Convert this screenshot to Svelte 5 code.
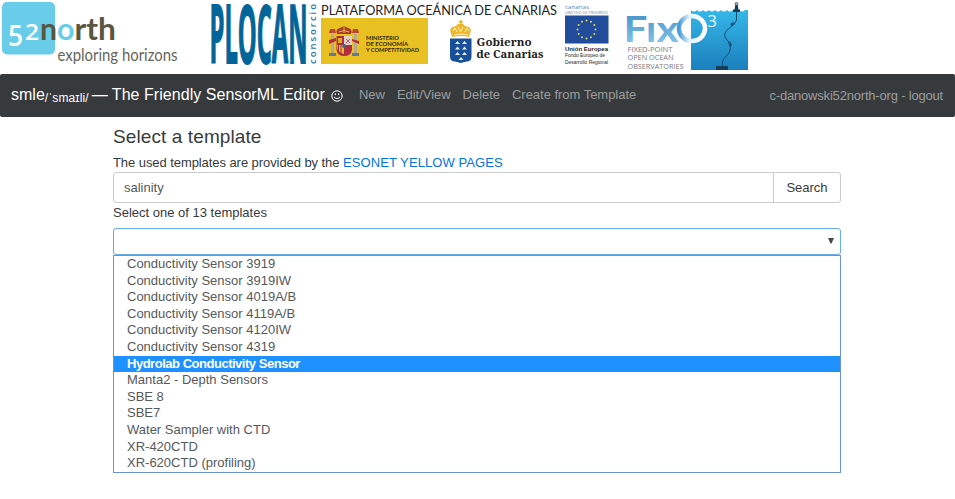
<script>
  const links = ['New', 'Edit/View', 'Delete', 'Create from Template'];
  const templates = [
    'Conductivity Sensor 3919',
    'Conductivity Sensor 3919IW',
    'Conductivity Sensor 4019A/B',
    'Conductivity Sensor 4119A/B',
    'Conductivity Sensor 4120IW',
    'Conductivity Sensor 4319',
    'Hydrolab Conductivity Sensor',
    'Manta2 - Depth Sensors',
    'SBE 8',
    'SBE7',
    'Water Sampler with CTD',
    'XR-420CTD',
    'XR-620CTD (profiling)'
  ];
  const highlighted = 'Hydrolab Conductivity Sensor';
  let query = $state('salinity');
  const stars = Array.from({ length: 12 }, (_, i) => ({
    x: 586.5 + 9 * Math.sin((i * Math.PI) / 6),
    y: 29.5 - 9 * Math.cos((i * Math.PI) / 6)
  }));
</script>

<header class="logos">
  <svg class="north" width="190" height="74" viewBox="0 0 190 74" role="img" aria-label="52north">
    <rect x="2" y="2" width="53" height="52.5" rx="5" fill="#69cdea" />
    <g font-family="Lato" font-weight="700" font-size="31">
      <text x="8" y="45.500" fill="#fff" font-family="Open Sans" font-weight="600" font-size="29" textLength="15" lengthAdjust="spacingAndGlyphs">5</text>
      <text x="25" y="39.500" fill="#fff" font-family="Open Sans" font-weight="600" font-size="21" textLength="14" lengthAdjust="spacingAndGlyphs">2</text>
      <text x="40" y="39.500" fill="#59573f" textLength="17" lengthAdjust="spacingAndGlyphs">n</text>
      <text x="57" y="39.500" fill="#69cdea" textLength="17.500" lengthAdjust="spacingAndGlyphs">o</text>
      <text x="74.500" y="39.500" fill="#59573f" textLength="41.500" lengthAdjust="spacingAndGlyphs">rth</text>
    </g>
    <text x="57.500" y="60.500" fill="#67655a" font-family="Lato" font-size="16.500" textLength="120" lengthAdjust="spacingAndGlyphs">exploring horizons</text>
  </svg>

  <svg class="plocan" width="415" height="74" viewBox="205 0 415 74" role="img" aria-label="PLOCAN consorcio">
    <text x="209.500" y="63" fill="#026599" stroke="#026599" stroke-width="1.800" font-family="Open Sans" font-weight="700" font-size="80" textLength="98" lengthAdjust="spacingAndGlyphs">PLOCAN</text>
    <text transform="translate(316 64) rotate(-90)" fill="#2377a5" font-family="Open Sans" font-weight="600" font-size="9.500" textLength="60">consorcio</text>
    <text x="321" y="15" fill="#222" font-family="Lato" font-size="14" textLength="236" lengthAdjust="spacingAndGlyphs">PLATAFORMA OCEÁNICA DE CANARIAS</text>

    <rect x="321" y="18" width="107" height="46" fill="#e9c022" />
    <g>
      <rect x="331" y="34" width="3" height="19" fill="#b9aa94" />
      <rect x="354" y="34" width="3" height="19" fill="#b9aa94" />
      <path d="M329 33h7l-1-4h-5zM352 33h7l-1-4h-5z" fill="#bd4630" />
      <path d="M329 53h7v3h-7zM352 53h7v3h-7z" fill="#607b98" />
      <path d="M329 40l7-2v3l-7 3zM352 39l7 2v3l-7-3z" fill="#b92d35" />
      <path d="M336.500 36h15.500v14q-1 6-7.750 6t-7.750-6z" fill="#b02e3e" />
      <path d="M344 36h8v9h-8z" fill="#ddd0c7" />
      <path d="M337 45h7v9q-7-1-7-9z" fill="#e6b93b" />
      <path d="M338.500 45v7M341 45v9" stroke="#a8303a" />
      <path d="M338 38h4v5h-4z" fill="#d8a82b" />
      <path d="M346 39l4 4m0-4l-4 4" stroke="#b95d72" />
      <circle cx="344.200" cy="46" r="2" fill="#47618b" />
      <path d="M337 34q-2-5 3-6l4-2 4 2q5 1 3 6z" fill="#a93a2b" />
      <path d="M339 32q5-3 10 0M344 26v7" stroke="#e5b847" fill="none" />
    </g>
    <g fill="#30280b" font-family="Lato" font-weight="700" font-size="5.600">
      <text x="366" y="40" textLength="33" lengthAdjust="spacingAndGlyphs">MINISTERIO</text>
      <text x="366" y="46" textLength="42" lengthAdjust="spacingAndGlyphs">DE ECONOMÍA</text>
      <text x="366" y="52" textLength="53" lengthAdjust="spacingAndGlyphs">Y COMPETITIVIDAD</text>
    </g>

    <path d="M450 38.500h21.500v18q0 5-5 5l-5.750 1.500-5.750-1.500q-5 0-5-5z" fill="#174f98" />
    <path d="M455 44l2.500-3 2.500 3zM462 44l2.500-3 2.500 3zM455 49.500l2.500-3 2.500 3zM462 49.500l2.500-3 2.500 3zM455 55l2.500-3 2.500 3zM462 55l2.500-3 2.500 3zM458.500 60l2.500-3 2.500 3z" fill="#e7f0fa" />
    <path d="M452 37l-2-7 2-3 4-1 2-2h5l2 2 4 1 2 3-2 7q-8-2-17 0z" fill="#edb72c" />
    <path d="M460.800 20v5M458.800 22h4" stroke="#e8b22d" stroke-width="1.500" />
    <path d="M453 31l2-3 2 4m1-5l2.500 5 2.500-5m2 5l2-4 2 3M454 35q7-2 14 0" fill="none" stroke="#fff0b5" stroke-width="1" />
    <g font-family="Noto Serif, DejaVu Serif, Liberation Serif, serif" font-weight="700" font-size="11" fill="#202020">
      <text x="476.500" y="46" textLength="55" lengthAdjust="spacingAndGlyphs">Gobierno</text>
      <text x="476.500" y="57.500" textLength="67" lengthAdjust="spacingAndGlyphs">de Canarias</text>
    </g>

    <text x="565" y="9" fill="#4e83bd" font-family="Open Sans" font-size="6" textLength="24">canarias</text>
    <text x="565" y="13.500" fill="#6387b5" font-family="Open Sans" font-size="4" textLength="43" lengthAdjust="spacingAndGlyphs">OBJETIVO DE PROGRESO</text>
    <rect x="565" y="15.500" width="43.500" height="28" fill="#214b9b" />
    {#each stars as star}
      <circle cx={star.x} cy={star.y} r="1.050" fill="#d9d449" />
    {/each}
    <g font-family="Liberation Sans" fill="#252525" font-size="6">
      <text x="565" y="50.500" font-weight="700" textLength="43" lengthAdjust="spacingAndGlyphs">Unión Europea</text>
      <text x="565" y="57" font-size="5.500" textLength="40" lengthAdjust="spacingAndGlyphs">Fondo Europeo de</text>
      <text x="565" y="63.500" font-size="5.500" textLength="43" lengthAdjust="spacingAndGlyphs">Desarrollo Regional</text>
    </g>
  </svg>

  <svg class="fixo" width="135" height="74" viewBox="620 0 135 74" role="img" aria-label="FixO3">
    <defs>
      <linearGradient id="sea" x2="0" y2="1"><stop stop-color="#35b7e8" /><stop offset="1" stop-color="#1b7fbd" /></linearGradient>
      <linearGradient id="word" x2="0" y2="1"><stop stop-color="#3887c2" /><stop offset="1" stop-color="#8fcef0" /></linearGradient>
      <linearGradient id="ring"><stop stop-color="#4a9bd3" /><stop offset=".4" stop-color="#e2f4ff" /><stop offset="1" stop-color="#fff" /></linearGradient>
    </defs>
    <path d="M691 10q3 3 6 0q3 3 6 0q3 3 6 0q3 3 6 0q3 3 6 0q3 3 6 0q3 3 6 0q3 3 6 0q3 3 6 0q3 0 3 0v60h-57z" fill="url(#sea)" />
    <text x="623.500" y="42" fill="url(#word)" font-family="Lato" font-weight="700" font-size="36" textLength="55" lengthAdjust="spacingAndGlyphs">Fıx</text>
    <ellipse cx="692" cy="28.500" rx="13" ry="12.500" fill="none" stroke="url(#ring)" stroke-width="4.500" />
    <text x="707.500" y="27" fill="#e6f8ff" font-family="Open Sans" font-size="16.500">3</text>
    <path d="M736.500 10v10q-1 4-7 8-7 5-4 10 5 4 5 10 0 5-5 9-4 3-3 10" fill="none" stroke="#174c75" stroke-width="1" />
    <path d="M734.500 10l1-7h2l1 7zM733 9.500h7v2.500h-7zM716 66h12v4h-12z" fill="#123e5e" />
    <circle cx="736.500" cy="3.800" r="1.500" fill="#9bb3c0" stroke="#365063" stroke-width=".6" />
    <path d="M731 25l3-2M729 42l2 4" stroke="#174c75" stroke-width="2.500" />
    <g fill="#7a7a80" font-family="Open Sans" font-size="7.500">
      <text x="627.500" y="51.500" textLength="45" lengthAdjust="spacingAndGlyphs">FIXED-POINT</text>
      <text x="627.500" y="60" textLength="46" lengthAdjust="spacingAndGlyphs">OPEN OCEAN</text>
      <text x="627.500" y="68.500" textLength="56" lengthAdjust="spacingAndGlyphs">OBSERVATORIES</text>
    </g>
  </svg>
</header>

<nav>
  <a class="brand" href="#home"><span class="name">smle</span><sub>/ˈsmaɪli/</sub><span class="title">— The Friendly SensorML Editor</span>
    <svg class="smile" width="12" height="12" viewBox="0 0 12 12"><circle cx="6" cy="6" r="5.200" fill="none" stroke="#fff" /><path d="M3 7q3 3.200 6 0" fill="none" stroke="#fff" /><path d="M3.800 3.500h1.200v1.500h-1.200zM7 3.500h1.200v1.500h-1.200z" fill="#fff" /></svg>
  </a>
  <div class="links">{#each links as link}<a href="#nav">{link}</a>{/each}</div>
  <a class="logout" href="#logout">c-danowski52north-org - logout</a>
</nav>

<main>
  <h1>Select a template</h1>
  <p class="source">The used templates are provided by the <a href="#esonet">ESONET YELLOW PAGES</a></p>
  <div class="search">
    <input bind:value={query} aria-label="Search templates" />
    <button>Search</button>
  </div>
  <p class="count">Select one of 13 templates</p>
  <div class="select" role="combobox" aria-expanded="true" aria-controls="templates" tabindex="0">
    <svg width="6" height="6" viewBox="0 0 6 6"><path d="M0 0h6L3.500 5.500h-1z" fill="#484848" /></svg>
  </div>
  <ul id="templates" role="listbox">
    {#each templates as template}
      <li role="option" aria-selected={template === highlighted} class:highlighted={template === highlighted}>{template}</li>
    {/each}
  </ul>
</main>

<style>
  :global(body) { background: #fff; font-family: 'Liberation Sans', Arial, sans-serif; font-size: 13px; color: #373a3c; overflow: hidden; }
  a { text-decoration: none; }
  .logos { display: flex; height: 74px; }
  .logos svg { flex: none; }
  .plocan { margin-left: 15px; }
  nav { display: flex; height: 43px; box-sizing: border-box; padding: 0 12px 2px 11px; align-items: center; background: #373a3c; border-radius: 2px; white-space: nowrap; }
  .brand { display: flex; align-items: center; width: 348px; color: #fff; font-size: 16px; }
  sub { align-self: center; padding-top: 7px; font-size: 12px; line-height: 14px; vertical-align: baseline; letter-spacing: .1px; }
  .title { margin-left: 3px; letter-spacing: .04px; }
  .smile { margin-left: 6px; margin-top: 3px; }
  .links { display: flex; gap: 12px; }
  .links a { color: #9b9c9d; letter-spacing: -.03px; }
  .logout { margin-left: auto; padding-top: 2px; color: #9b9c9d; letter-spacing: -.19px; }
  main { width: 728px; margin-left: 113px; }
  h1 { margin: 0; padding-top: 9px; height: 30px; box-sizing: border-box; font-size: 19px; line-height: 22px; font-weight: 400; letter-spacing: .1px; }
  p { margin: 0; line-height: 18px; }
  .source { padding-top: 7px; height: 25px; box-sizing: border-box; letter-spacing: -.07px; }
  .source a { color: #0275d8; letter-spacing: .08px; }
  .search { display: flex; height: 31px; }
  input, button { font: inherit; box-sizing: border-box; border: 1px solid #ccc; background: #fff; margin: 0; outline: 0; }
  input { width: 661px; padding: 0 10px; color: #55595c; border-radius: 3px 0 0 3px; }
  button { flex: 1; padding: 0; margin-left: -1px; color: #373a3c; border-radius: 0 3px 3px 0; }
  .count { padding-top: 1px; height: 25px; box-sizing: border-box; }
  .select { display: flex; justify-content: flex-end; align-items: center; height: 27px; box-sizing: border-box; border: 1px solid #66afe9; border-radius: 3px; padding: 0 6px 2px 0; outline: 0; }
  ul { list-style: none; margin: 0; padding: 0; border: 1px solid #6994cf; height: 218px; box-sizing: border-box; }
  li { height: 16.600px; line-height: 16.600px; padding-left: 13px; color: #55595c; }
  .highlighted { background: #1e90ff; color: #fff; font-weight: 700; letter-spacing: -.48px; }
</style>
